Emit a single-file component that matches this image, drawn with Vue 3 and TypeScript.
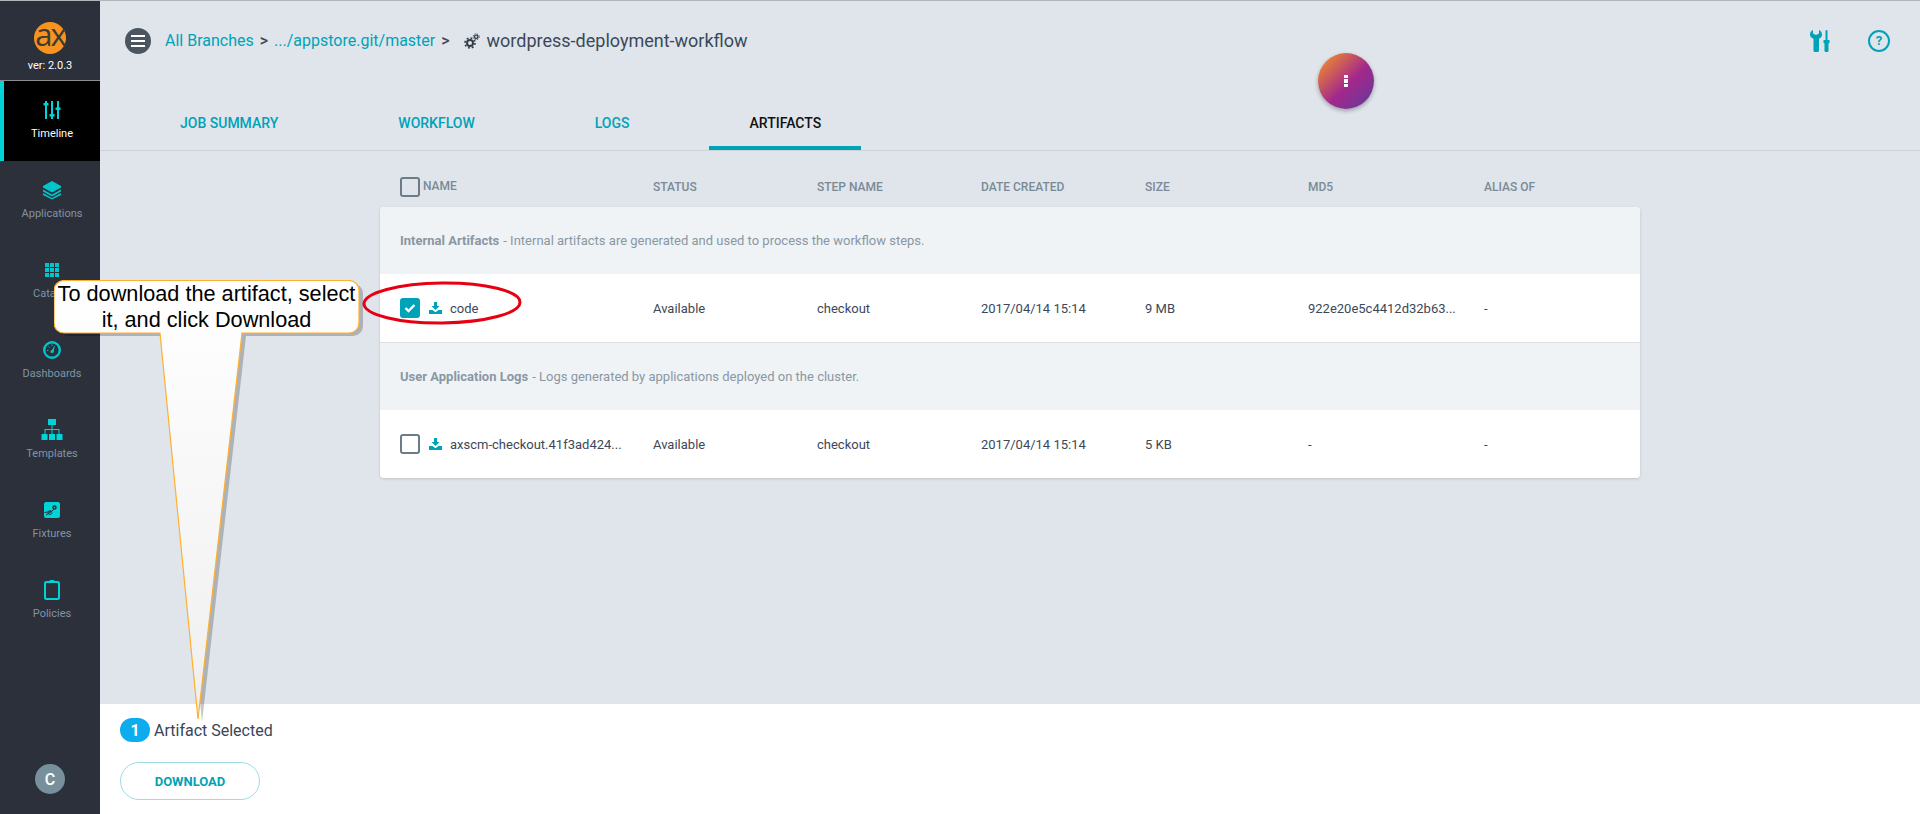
<template>
  <div class="page">
    <aside class="sidebar">
      <div class="brand">
        <svg class="logo" width="34" height="34" viewBox="0 0 34 34">
          <circle cx="17" cy="17" r="16" fill="#f7931e" />
          <text x="17" y="25" text-anchor="middle" class="logo-text">ax</text>
        </svg>
        <span class="version">ver: 2.0.3</span>
      </div>
      <nav class="nav">
        <a v-for="item in navItems" :key="item.label" class="nav-item" :class="{ active: item.active }">
          <svg class="nav-icon" width="24" height="24" viewBox="0 0 24 24" v-html="item.icon"></svg>
          <span>{{ item.label }}</span>
        </a>
      </nav>
      <div class="avatar">C</div>
    </aside>

    <main class="main">
      <header class="topbar">
        <button class="menu-btn"><i></i><i></i><i></i></button>
        <div class="crumbs">
          <a>All Branches</a><b>&gt;</b><a>.../appstore.git/master</a><b>&gt;</b>
          <svg class="gears" width="16" height="16" viewBox="0 0 16 16">
            <circle cx="6" cy="10" r="3" fill="none" stroke="#333c48" stroke-width="2" />
            <circle cx="6" cy="10" r="5" fill="none" stroke="#333c48" stroke-width="1.6" stroke-dasharray="1.9 2" />
            <circle cx="12.2" cy="3.8" r="1.7" fill="none" stroke="#333c48" stroke-width="1.3" />
            <circle cx="12.2" cy="3.8" r="3" fill="none" stroke="#333c48" stroke-width="1" stroke-dasharray="1.2 1.2" />
          </svg>
          <span class="job-name">wordpress-deployment-workflow</span>
        </div>
        <div class="top-actions">
          <svg width="20" height="22" viewBox="0 0 20 22" fill="#00a2b8">
            <path d="M3 0v3.500l3 1.600 3-1.600V0c1.800 .8 3 2.500 3 4.500 0 2-1.200 3.600-3 4.300V20.500A1.500 1.500 0 0 1 7.500 22h-2.500A1.500 1.500 0 0 1 3.500 20.500V8.800C1.500 8.100 0 6.500 0 4.500 0 2.500 1.200 .8 3 0z" />
            <rect x="15.500" y="0" width="2" height="11" rx="1" />
            <rect x="13.500" y="10" width="6" height="3" rx=".5" />
            <rect x="14.500" y="12" width="4" height="10" rx="1.200" />
          </svg>
          <span class="help">?</span>
        </div>
      </header>

      <div class="tabs">
        <a v-for="tab in tabs" :key="tab" class="tab" :class="{ current: tab === 'ARTIFACTS' }">{{ tab }}</a>
      </div>

      <section class="content">
        <div class="columns row-grid">
          <div class="name-head"><span class="check"></span><span>NAME</span></div>
          <span>STATUS</span>
          <span>STEP NAME</span>
          <span>DATE CREATED</span>
          <span>SIZE</span>
          <span>MD5</span>
          <span>ALIAS OF</span>
        </div>
        <div class="card">
          <template v-for="group in groups" :key="group.title">
            <div class="group-head"><strong>{{ group.title }}</strong> - {{ group.text }}</div>
            <div class="row row-grid">
              <div class="name-cell">
                <span class="check" :class="{ checked: group.row.checked }">
                  <svg v-if="group.row.checked" width="12" height="10" viewBox="0 0 12 10">
                    <path d="M1.500 5l3 3 6-6" fill="none" stroke="#fff" stroke-width="2.400" />
                  </svg>
                </span>
                <svg class="dl" width="13" height="12" viewBox="0 0 13 12" fill="#00a2b8">
                  <path d="M5 0h3v4h2.500L6.500 8 2.500 4H5z" />
                  <path d="M0 8h3.500l3 2.200 3-2.200H13v4H0z" />
                </svg>
                <span class="file">{{ group.row.name }}</span>
              </div>
              <span>Available</span>
              <span>checkout</span>
              <span>2017/04/14 15:14</span>
              <span>{{ group.row.size }}</span>
              <span>{{ group.row.md5 }}</span>
              <span>-</span>
            </div>
          </template>
        </div>
      </section>

      <footer class="footer">
        <div class="selected"><span class="count">1</span>Artifact Selected</div>
        <button class="download">DOWNLOAD</button>
      </footer>
    </main>

    <button class="fab"><i></i><i></i><i></i></button>

    <svg class="ring" width="170" height="50" viewBox="0 0 170 50">
      <ellipse cx="85" cy="25" rx="78" ry="20" fill="none" stroke="#e60012" stroke-width="3" transform="rotate(-0.6 85 25)" />
    </svg>

    <div class="callout">
      <svg class="callout-shape" width="320" height="450" viewBox="0 0 320 450">
        <defs>
          <linearGradient id="calloutFill" x1="0" y1="0" x2="0" y2="1">
            <stop offset="0" stop-color="#ffffff" />
            <stop offset="1" stop-color="#efefef" />
          </linearGradient>
        </defs>
        <path :d="calloutPath" transform="translate(4 3)" fill="#000" fill-opacity="0.22" />
        <path :d="calloutPath" fill="url(#calloutFill)" stroke="#ffb02e" stroke-width="1.200" />
      </svg>
      <div class="callout-text">To download the artifact, select<br />it, and click Download</div>
    </div>
  </div>
</template>

<script setup lang="ts">
interface NavItem {
  label: string;
  icon: string;
  active?: boolean;
}

const navItems: NavItem[] = [
  {
    label: 'Timeline',
    active: true,
    icon: '<g fill="#00d4d8"><rect x="5" y="3" width="2" height="18"/><rect x="11" y="3" width="2" height="18"/><rect x="17" y="3" width="2" height="18"/><rect x="3.500" y="5" width="5" height="2.500"/><rect x="9.500" y="16" width="5" height="2.500"/><rect x="15.500" y="9.500" width="5" height="2.500"/></g>',
  },
  {
    label: 'Applications',
    icon: '<g fill="#00c6cc"><path d="M12 3l9 5v1.500l-9 5-9-5V8z"/><path d="M3 11.500l9 5 9-5v2l-9 5-9-5z"/><path d="M3 15l9 5 9-5v2l-9 4.500L3 17z"/></g>',
  },
  {
    label: 'Catalog',
    icon: '<g fill="#00c6cc"><rect x="5" y="5" width="4" height="4"/><rect x="10" y="5" width="4" height="4"/><rect x="15" y="5" width="4" height="4"/><rect x="5" y="10" width="4" height="4"/><rect x="10" y="10" width="4" height="4"/><rect x="15" y="10" width="4" height="4"/><rect x="5" y="15" width="4" height="4"/><rect x="10" y="15" width="4" height="4"/><rect x="15" y="15" width="4" height="4"/></g>',
  },
  {
    label: 'Dashboards',
    icon: '<circle cx="12" cy="12" r="7.800" fill="none" stroke="#00c6cc" stroke-width="2.400"/><path d="M11 13.500l4-6.500-1.500 7.500z" fill="#00c6cc"/><circle cx="12" cy="13.500" r="1.500" fill="#00c6cc"/><path d="M7 12.500h1.500M12 6.500V8M8.500 8.500l1 1" stroke="#00c6cc" stroke-width="1"/>',
  },
  {
    label: 'Templates',
    icon: '<g fill="#00d4d8"><rect x="8" y="1" width="8" height="6"/><rect x="1.500" y="16" width="6" height="6"/><rect x="9" y="16" width="6" height="6"/><rect x="16.500" y="16" width="6" height="6"/><path d="M11.500 7h1v4h7v5h-1v-4h-6v4h-1v-4h-6v4h-1v-5h7z"/></g>',
  },
  {
    label: 'Fixtures',
    icon: '<rect x="4" y="4" width="16" height="16" rx="2" fill="#00d4d8"/><path d="M4.500 14.500l7-1 3-3M6 17l5.500-3.500" stroke="#2b303b" stroke-width="1" fill="none"/><circle cx="14.500" cy="9.500" r="2.200" fill="#2b303b"/><circle cx="14.500" cy="9.500" r=".8" fill="#00d4d8"/><circle cx="10" cy="14.500" r="2" fill="none" stroke="#2b303b" stroke-width=".8"/>',
  },
  {
    label: 'Policies',
    icon: '<rect x="5" y="4" width="14" height="17" rx="1.500" fill="none" stroke="#00d4d8" stroke-width="2"/><rect x="9.500" y="2" width="5" height="3" rx="1" fill="#00d4d8"/>',
  },
];

const tabs = ['JOB SUMMARY', 'WORKFLOW', 'LOGS', 'ARTIFACTS'];

const groups = [
  {
    title: 'Internal Artifacts',
    text: 'Internal artifacts are generated and used to process the workflow steps.',
    row: { name: 'code', checked: true, size: '9 MB', md5: '922e20e5c4412d32b63...' },
  },
  {
    title: 'User Application Logs',
    text: 'Logs generated by applications deployed on the cluster.',
    row: { name: 'axscm-checkout.41f3ad424...', checked: false, size: '5 KB', md5: '-' },
  },
];

// bubble and its long tail, drawn as one outline
const calloutPath =
  'M10 0.500H295a10 10 0 0 1 10 10V43a10 10 0 0 1-10 10H188L144 439 106 53H10a10 10 0 0 1-10-10V10.500a10 10 0 0 1 10-10z';
</script>

<style>
html,
body {
  margin: 0;
  overflow: hidden;
}
</style>

<style scoped>
.page {
  position: relative;
  display: flex;
  width: 1920px;
  height: 814px;
  overflow: hidden;
  font-family: Roboto, "Open Sans", sans-serif;
  background: #dfe5eb;
  color: #3c4858;
}

.sidebar {
  display: flex;
  flex-direction: column;
  flex: 0 0 100px;
  background: #2b303b;
  border-top: 1px solid #b4b4b8;
}

.brand {
  display: flex;
  flex-direction: column;
  align-items: center;
  height: 80px;
  padding-top: 20px;
  box-sizing: border-box;
  border-bottom: 1px solid #8a8d92;
}

.logo {
  overflow: visible;
}

.logo-text {
  font-family: "Open Sans", sans-serif;
  font-size: 31px;
  fill: #3a3a3a;
  letter-spacing: -2px;
}

.version {
  margin-top: 4px;
  font-size: 11px;
  color: #fff;
}

.nav {
  flex: 1;
}

.nav-item {
  display: flex;
  flex-direction: column;
  align-items: center;
  height: 80px;
  padding-top: 17px;
  box-sizing: border-box;
  border-left: 4px solid transparent;
  font-size: 11px;
  color: #8294a4;
}

.nav-item span {
  margin-top: 5px;
}

.nav-item.active {
  background: #000;
  border-left-color: #00d4d8;
  color: #fff;
}

.avatar {
  display: flex;
  align-items: center;
  justify-content: center;
  width: 30px;
  height: 30px;
  margin: 0 0 20px 35px;
  border-radius: 50%;
  background: #78909c;
  color: #fff;
  font-size: 16px;
  font-weight: 500;
}

.main {
  display: flex;
  flex-direction: column;
  flex: 1;
  min-width: 0;
  border-top: 1px solid #b4b4b8;
}

.topbar {
  display: flex;
  align-items: center;
  height: 79px;
  padding: 0 30px 0 25px;
  box-sizing: border-box;
}

.menu-btn {
  display: flex;
  flex-direction: column;
  align-items: center;
  justify-content: center;
  gap: 3px;
  width: 26px;
  height: 26px;
  padding: 0;
  border: 0;
  border-radius: 50%;
  background: #4a5560;
}

.menu-btn i {
  display: block;
  width: 14px;
  height: 2px;
  background: #fff;
}

.crumbs {
  display: flex;
  align-items: center;
  margin-left: 14px;
  font-size: 16px;
  color: #00a2b8;
}

.crumbs b {
  margin: 0 6px;
  font-weight: 500;
  color: #3c4858;
}

.gears {
  margin: 0 7px 0 8px;
}

.job-name {
  font-size: 18px;
  font-weight: 400;
  color: #3c4858;
}

.top-actions {
  display: flex;
  align-items: center;
  gap: 38px;
  margin-left: auto;
}

.help {
  display: flex;
  align-items: center;
  justify-content: center;
  width: 22px;
  height: 22px;
  box-sizing: border-box;
  border: 2px solid #00a2b8;
  border-radius: 50%;
  font-size: 13px;
  font-weight: 700;
  color: #00a2b8;
}

.tabs {
  display: flex;
  gap: 40px;
  height: 71px;
  padding-left: 40px;
  box-sizing: border-box;
  border-bottom: 1px solid #ccd2d4;
}

.tab {
  height: 70px;
  padding: 35px 40px 0;
  box-sizing: border-box;
  font-size: 14px;
  line-height: 16px;
  font-weight: 500;
  color: #00a2b8;
}

.tab.current {
  margin-left: -1px;
  padding-left: 41px;
  border-bottom: 4px solid #00a2b8;
  color: #111;
}

.content {
  flex: 1;
  padding: 0 280px;
}

.row-grid {
  display: grid;
  grid-template-columns: 253px 164px 164px 164px 163px 176px 1fr;
  align-items: center;
  padding-left: 20px;
}

.columns {
  height: 56px;
  padding-top: 16px;
  box-sizing: border-box;
  font-size: 12px;
  font-weight: 500;
  color: #7a8a96;
}

.name-head {
  display: flex;
  align-items: center;
  gap: 3px;
}

.name-head span:last-child {
  margin-top: -2px;
}

.card {
  overflow: hidden;
  background: #fff;
  border-radius: 4px;
  box-shadow: 0 1px 3px rgba(0, 0, 0, 0.15);
}

.group-head {
  display: flex;
  align-items: center;
  gap: 4px;
  height: 67px;
  padding-left: 20px;
  background: #eff3f6;
  font-size: 13px;
  color: #8a97a2;
}

.group-head strong {
  font-weight: 700;
}

.row {
  height: 68px;
  font-size: 13px;
  background: #fff;
}

.row:not(:last-child) {
  border-bottom: 1px solid #dde0e3;
  box-sizing: content-box;
}

.name-cell {
  display: flex;
  align-items: center;
}

.dl {
  margin-left: 9px;
}

.file {
  margin-left: 8px;
}

.check {
  display: inline-flex;
  align-items: center;
  justify-content: center;
  width: 20px;
  height: 20px;
  box-sizing: border-box;
  border: 2px solid #6b7c88;
  border-radius: 3px;
}

.check.checked {
  background: #00a2b8;
  border-color: #00a2b8;
}

.footer {
  display: flex;
  flex-direction: column;
  align-items: flex-start;
  height: 110px;
  padding: 14px 0 0 20px;
  box-sizing: border-box;
  background: #fff;
}

.selected {
  display: flex;
  align-items: center;
  gap: 4px;
  font-size: 16px;
  font-weight: 400;
  color: #3a4555;
}

.count {
  display: flex;
  align-items: center;
  justify-content: center;
  width: 30px;
  height: 24px;
  border-radius: 12px;
  background: #0dacee;
  color: #fff;
  font-weight: 700;
}

.download {
  width: 140px;
  height: 38px;
  margin-top: 20px;
  border: 1px solid #9edbe5;
  border-radius: 19px;
  background: #fff;
  font-family: inherit;
  font-size: 13px;
  font-weight: 700;
  color: #00a2b8;
}

.fab {
  position: absolute;
  left: 1318px;
  top: 53px;
  display: flex;
  flex-direction: column;
  align-items: center;
  justify-content: center;
  gap: 1px;
  width: 56px;
  height: 56px;
  padding: 0;
  border: 0;
  border-radius: 50%;
  background: linear-gradient(135deg, #f08a2c 8%, #a3288c 55%, #5f3a9c 100%);
  box-shadow: 0 2px 4px rgba(0, 0, 0, 0.3);
}

.fab i {
  display: block;
  width: 4px;
  height: 3.500px;
  background: #fff;
}

.ring {
  position: absolute;
  left: 357px;
  top: 278px;
}

.callout {
  position: absolute;
  left: 54px;
  top: 280px;
  width: 305px;
  height: 53px;
}

.callout-shape {
  position: absolute;
  left: 0;
  top: 0;
}

.callout-text {
  position: relative;
  padding-top: 1px;
  font-family: "Liberation Sans", Arial, sans-serif;
  font-size: 21.700px;
  line-height: 26px;
  text-align: center;
  white-space: nowrap;
  color: #000;
}
</style>
